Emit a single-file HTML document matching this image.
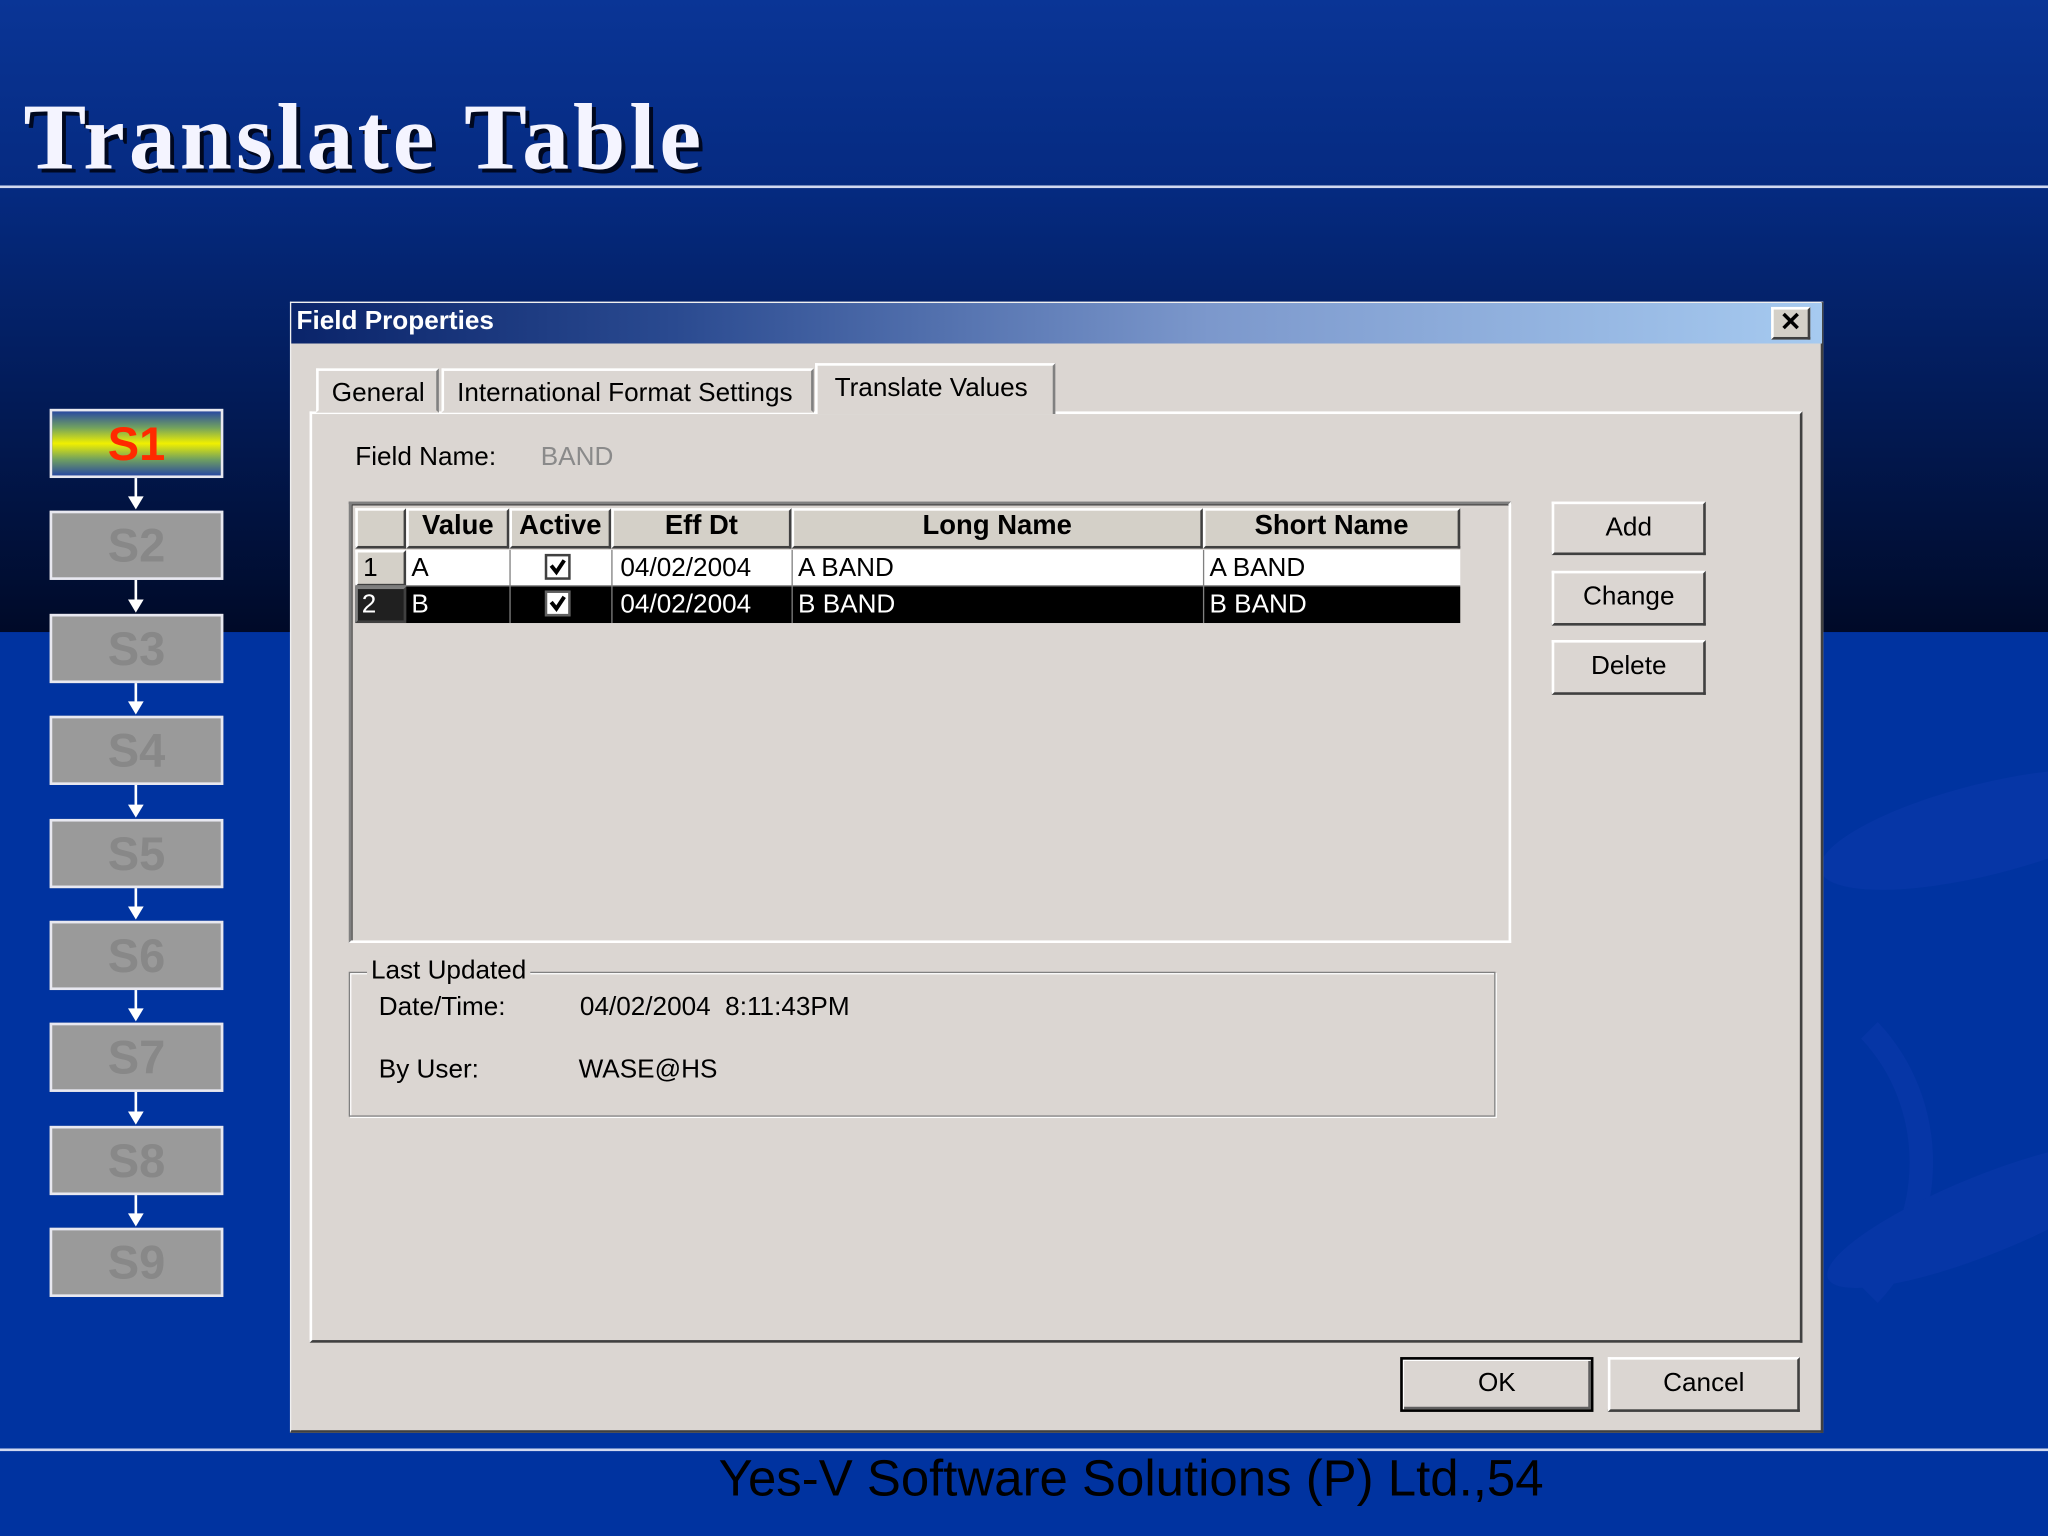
<!DOCTYPE html>
<html><head><meta charset="utf-8"><style>
*{margin:0;padding:0;box-sizing:border-box}
html,body{width:2048px;height:1536px;overflow:hidden;background:#0033a0}
#w{position:absolute;left:0;top:0;width:1568px;height:1176px;transform:scale(1.306122);transform-origin:0 0;overflow:hidden;font-family:"Liberation Sans",sans-serif}
.a{position:absolute}
.bgtop{left:0;top:0;width:1568px;height:484px;background:linear-gradient(#0a3596 0%,#052a80 30%,#021a55 65%,#000a28 100%)}
.bgbot{left:0;top:484px;width:1568px;height:692px;background:#0033a0}
.sw{border:18px solid #0636a6;border-radius:50%}
.title{left:18px;top:64px;font-family:"Liberation Serif",serif;font-weight:bold;font-size:72px;color:#f4f4ff;text-shadow:3px 3px 0 #000820;letter-spacing:3px}
.line{left:0;width:1568px;height:2px;background:#d0d8f0}
.sb{left:38px;width:133px;height:53px;border:2px solid #e8e8f0;background:#9a9a9a;color:#888;font-weight:bold;font-size:36px;text-align:center;line-height:49px}
.s1{background:linear-gradient(#2a4aa0 0%,#70a060 25%,#f0f000 50%,#70a060 75%,#2a4aa0 100%);color:#ff2a00}
.ar{left:103px;width:2px;background:#fff}
.ah{left:98px;width:0;height:0;border-left:6px solid transparent;border-right:6px solid transparent;border-top:10px solid #fff}
.dlg{left:222px;top:231px;width:1174px;height:866px;background:#dbd6d2;border:1px solid #f0f0f0;border-right:2px solid #404040;border-bottom:2px solid #404040}
.tb{left:0;top:0;width:1172px;height:31px;background:linear-gradient(90deg,#0a246a 0%,#2a4a90 25%,#7c98cc 60%,#a6caf0 100%)}
.tt{left:4px;top:3px;color:#fff;font-weight:bold;font-size:20px}
.x{left:1133px;top:3px;width:30px;height:25px;background:#d4d0c8;border:2px solid;border-color:#fff #404040 #404040 #fff;font-size:20px;font-weight:bold;text-align:center;line-height:20px}
.t{font-size:20px;color:#000;white-space:nowrap}
.tab{height:34px;border:2px solid;border-color:#fff #808080 transparent #fff;background:#dbd6d2;font-size:20px;padding:6px 0 0 10px}
.pnl{left:14px;top:83px;width:1143px;height:713px;border:2px solid;border-color:#fff #404040 #404040 #fff}
.grid{left:44px;top:152px;width:890px;height:338px;border:2px solid;border-color:#808080 #fff #fff #808080;box-shadow:inset 1px 1px 0 #404040}
.c{position:absolute;height:28px;font-size:20px;line-height:28px;white-space:nowrap;overflow:hidden}
.h{background:#d4d0c8;border:2px solid;border-color:#fff #404040 #404040 #fff;font-weight:bold;text-align:center;line-height:24px;font-size:21px}
.btn{background:#dbd6d2;border:2px solid;border-color:#fff #404040 #404040 #fff;font-size:20px;text-align:center}
.cb{position:absolute;width:20px;height:20px}
</style></head><body><div id="w">
<div class="a bgtop"></div><div class="a bgbot"></div>
<div class="a" style="left:1390px;top:600px;width:260px;height:70px;background:#0636a6;transform:rotate(-14deg);border-radius:50%"></div>
<div class="a sw" style="left:1200px;top:740px;width:280px;height:300px;border-color:transparent #0636a6 transparent transparent"></div>
<div class="a" style="left:1390px;top:900px;width:260px;height:60px;background:#0636a6;transform:rotate(-22deg);border-radius:50%"></div>
<div class="a title">Translate Table</div>
<div class="a line" style="top:142px"></div>
<div class="a line" style="top:1109px;height:2px"></div>
<div class="a" style="left:0;top:1108px;width:1568px;text-align:center;padding-left:164px;font-size:39px;color:#000;line-height:50px">Yes-V Software Solutions (P) Ltd.,54</div>

<div class="a sb s1" style="top:313px">S1</div>
<div class="a sb" style="top:391px">S2</div>
<div class="a sb" style="top:470px">S3</div>
<div class="a sb" style="top:548px">S4</div>
<div class="a sb" style="top:627px">S5</div>
<div class="a sb" style="top:705px">S6</div>
<div class="a sb" style="top:783px">S7</div>
<div class="a sb" style="top:862px">S8</div>
<div class="a sb" style="top:940px">S9</div>
<div class="a ar" style="top:366px;height:16px"></div><div class="a ah" style="top:380px"></div>
<div class="a ar" style="top:444px;height:16px"></div><div class="a ah" style="top:459px"></div>
<div class="a ar" style="top:523px;height:16px"></div><div class="a ah" style="top:537px"></div>
<div class="a ar" style="top:601px;height:16px"></div><div class="a ah" style="top:616px"></div>
<div class="a ar" style="top:680px;height:16px"></div><div class="a ah" style="top:694px"></div>
<div class="a ar" style="top:758px;height:16px"></div><div class="a ah" style="top:772px"></div>
<div class="a ar" style="top:836px;height:16px"></div><div class="a ah" style="top:851px"></div>
<div class="a ar" style="top:915px;height:16px"></div><div class="a ah" style="top:929px"></div>

<div class="a dlg">
 <div class="a tb"><div class="a tt">Field Properties</div><div class="a x">✕</div></div>
 <div class="a pnl"></div>
 <div class="a tab" style="left:19px;top:50px;width:94px">General</div>
 <div class="a tab" style="left:115px;top:50px;width:285px">International Format Settings</div>
 <div class="a tab" style="left:401px;top:46px;width:184px;height:39px;border-bottom:none;padding-left:13px">Translate Values</div>
 <div class="a t" style="left:49px;top:107px">Field Name:</div>
 <div class="a t" style="left:191px;top:107px;color:#8a8a8a">BAND</div>
 <div class="a grid">
  <div class="c h" style="left:3px;top:3px;width:39px;height:31px"></div>
  <div class="c h" style="left:42px;top:3px;width:79px;height:31px">Value</div>
  <div class="c h" style="left:121px;top:3px;width:78px;height:31px">Active</div>
  <div class="c h" style="left:199px;top:3px;width:138px;height:31px">Eff Dt</div>
  <div class="c h" style="left:337px;top:3px;width:315px;height:31px">Long Name</div>
  <div class="c h" style="left:652px;top:3px;width:197px;height:31px">Short Name</div>
  <div class="c h" style="left:3px;top:35px;width:39px;text-align:left;font-weight:normal;padding-left:4px;line-height:24px;font-size:20px">1</div>
  <div class="c" style="left:42px;top:35px;width:807px;background:#fff"></div>
  <div class="c" style="left:46px;top:35px">A</div>
  <div class="c" style="left:206px;top:35px">04/02/2004</div>
  <div class="c" style="left:342px;top:35px">A BAND</div>
  <div class="c" style="left:657px;top:35px">A BAND</div>
  <svg class="cb" style="left:148px;top:38px" viewBox="0 0 20 20"><rect x="1" y="1" width="18" height="18" fill="#fff" stroke="#404040" stroke-width="2"/><path d="M5 9l4 5 6-9" fill="none" stroke="#000" stroke-width="3"/></svg>
  <div class="c" style="left:3px;top:63px;width:39px;background:#202020;color:#fff;border:2px solid;border-color:#808080 #404040 #404040 #808080;padding-left:3px;line-height:24px">2</div>
  <div class="c" style="left:42px;top:63px;width:807px;background:#000"></div>
  <div class="c" style="left:46px;top:63px;color:#fff">B</div>
  <div class="c" style="left:206px;top:63px;color:#fff">04/02/2004</div>
  <div class="c" style="left:342px;top:63px;color:#fff">B BAND</div>
  <div class="c" style="left:657px;top:63px;color:#fff">B BAND</div>
  <svg class="cb" style="left:148px;top:66px" viewBox="0 0 20 20"><rect x="1" y="1" width="18" height="18" fill="#fff" stroke="#606060" stroke-width="2"/><path d="M5 9l4 5 6-9" fill="none" stroke="#000" stroke-width="3"/></svg>
  <div class="a" style="left:121px;top:35px;width:1px;height:56px;background:#808080"></div>
  <div class="a" style="left:199px;top:35px;width:1px;height:56px;background:#808080"></div>
  <div class="a" style="left:337px;top:35px;width:1px;height:56px;background:#808080"></div>
  <div class="a" style="left:652px;top:35px;width:1px;height:56px;background:#808080"></div>
  <div class="a" style="left:3px;top:62px;width:846px;height:1px;background:#808080"></div>
 </div>
 <div class="a btn" style="left:965px;top:152px;width:118px;height:41px;line-height:36px">Add</div>
 <div class="a btn" style="left:965px;top:205px;width:118px;height:42px;line-height:37px">Change</div>
 <div class="a btn" style="left:965px;top:258px;width:118px;height:42px;line-height:37px">Delete</div>
 <div class="a" style="left:44px;top:512px;width:878px;height:111px;border:1px solid #808080;box-shadow:1px 1px 0 #fff,inset 1px 1px 0 #fff"></div>
 <div class="a t" style="left:58px;top:500px;background:#dbd6d2;padding:0 3px">Last Updated</div>
 <div class="a t" style="left:67px;top:528px">Date/Time:</div>
 <div class="a t" style="left:221px;top:528px">04/02/2004&nbsp; 8:11:43PM</div>
 <div class="a t" style="left:67px;top:576px">By User:</div>
 <div class="a t" style="left:220px;top:576px">WASE@HS</div>
 <div class="a btn" style="left:849px;top:807px;width:148px;height:42px;line-height:36px;border:2px solid #000;box-shadow:inset 1px 1px 0 #fff,inset -2px -2px 0 #606060">OK</div>
 <div class="a btn" style="left:1008px;top:807px;width:147px;height:42px;line-height:37px">Cancel</div>
</div>
</div></body></html>
